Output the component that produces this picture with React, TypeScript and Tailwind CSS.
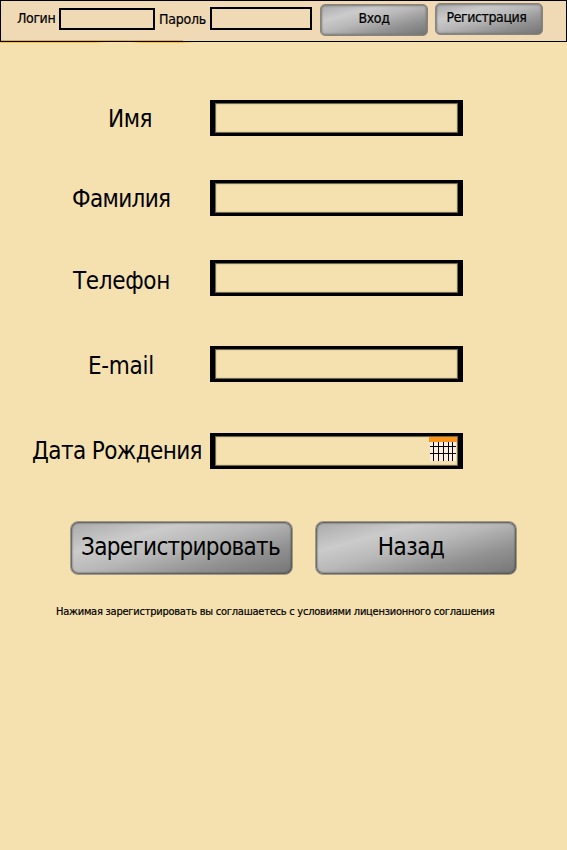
const metal =
  "bg-[linear-gradient(165deg,#a9a9a9_0%,#cbcbcb_28%,#b8b8b8_48%,#919191_74%,#757575_100%)]";
const smallEdge = "rounded-[5px] border border-[#8a8378] shadow-[inset_0_0_2px_1px_#7a7a7a]";
const largeEdge = "rounded-[8px] border border-[#a39a84] shadow-[inset_0_0_2px_1px_#4c4c4c]";

const rows = [
  { label: "Имя", pos: "pl-[108px] pt-px tracking-[-0.5px]", row: "mt-[57px]" },
  { label: "Фамилия", pos: "pl-[72px] pt-px tracking-[-0.65px]", row: "mt-[44px]" },
  { label: "Телефон", pos: "pl-[73px] pt-[3px] tracking-[-0.35px]", row: "mt-[44px]" },
  { label: "E-mail", pos: "pl-[88px] pt-[2px] tracking-[-0.3px]", row: "mt-[50px]" },
  { label: "Дата Рождения", pos: "pl-[32px] tracking-[-0.6px]", row: "mt-[51px]", date: true },
];

function CalendarIcon() {
  return (
    <svg width="29" height="25" viewBox="0 0 29 25" shapeRendering="crispEdges">
      <rect x="1" y="5" width="26" height="19" fill="#ffeee0" />
      <rect width="28" height="5" fill="#ff9418" />
      <path
        d="M4.5 5v19M9.5 5v19M14.5 5v19M19.5 5v19M23.5 5v19M1 9.5h26M1 16.5h26"
        stroke="#000"
        fill="none"
      />
    </svg>
  );
}

export default function App() {
  return (
    <main className="h-[850px] w-[567px] overflow-hidden bg-[#f5e1b0] font-['DejaVu_Sans_Condensed','Noto_Sans',sans-serif] text-black">
      <header className="flex h-[42px] items-start border border-black bg-[#f0dab5] text-[14px] leading-[20px] [-webkit-text-stroke:0.2px_#000]">
        <label className="ml-[16px] mt-[7px] w-[42px] whitespace-nowrap tracking-[-0.4px]">Логин</label>
        <input className="mt-[7px] h-[22px] w-[96px] border-2 border-black bg-transparent" />
        <label className="ml-[4px] mt-[8px] w-[51px] whitespace-nowrap tracking-[-0.25px]">Пароль</label>
        <input className="mt-[6px] h-[23px] w-[102px] border-2 border-black bg-transparent" />
        <button className={`ml-[8px] mt-[3px] h-[32px] w-[108px] pb-[4px] tracking-[-0.4px] ${metal} ${smallEdge}`}>
          Вход
        </button>
        <button className={`ml-[7px] mt-[2px] h-[32px] w-[108px] pb-[4px] pr-[5px] tracking-[-0.4px] ${metal} ${smallEdge}`}>
          Регистрация
        </button>
      </header>
      <div className="-mt-[2px] ml-px h-px w-[182px] bg-[#e6ab50]" />
      <div className="mt-px h-px w-[196px] bg-[linear-gradient(90deg,#f0bd50_0%,#f0bd50_48%,#f5e1b0_55%,#f5e1b0_66%,#f0bd50_72%,#f0bd50_92%,#f5e1b0_100%)]" />
      {rows.map((r) => (
        <div key={r.label} className={`flex h-[36px] ${r.row}`}>
          <label className={`w-[210px] shrink-0 whitespace-nowrap text-[24px] leading-[36px] ${r.pos}`}>
            {r.label}
          </label>
          <div className="flex h-[36px] w-[253px] justify-end border-x-[5px] border-y-[3px] border-black pt-px shadow-[inset_0_0_1px_1px_#62593f]">
            {r.date && <CalendarIcon />}
          </div>
        </div>
      ))}
      <div className="ml-[70px] mt-[52px] flex gap-[22px] text-[24px] tracking-[-0.68px]">
        <button className={`h-[54px] w-[223px] pb-[2px] pr-[2px] ${metal} ${largeEdge}`}>Зарегистрировать</button>
        <button className={`h-[54px] w-[202px] pb-[2px] pr-[10px] tracking-[-0.5px] ${metal} ${largeEdge}`}>Назад</button>
      </div>
      <p className="ml-[56px] mt-[29px] whitespace-nowrap text-[11px] leading-[16px] tracking-[-0.24px] [-webkit-text-stroke:0.2px_#000]">
        Нажимая зарегистрировать вы соглашаетесь с условиями лицензионного соглашения
      </p>
    </main>
  );
}
